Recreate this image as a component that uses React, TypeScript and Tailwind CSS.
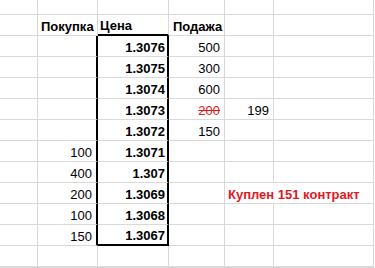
import React from "react";

type C = { t?: string; cls?: string };

const G = "border-[#d9d9d9]";

export default function App() {
  const rows: { buy?: string; price?: string; sell?: string; sellCls?: string; c4?: string; c4Cls?: string; c4Overflow?: boolean }[] = [
    { price: "1.3076", sell: "500" },
    { price: "1.3075", sell: "300" },
    { price: "1.3074", sell: "600" },
    { price: "1.3073", sell: "200", sellCls: "line-through text-[#e0191f]", c4: "199" },
    { price: "1.3072", sell: "150" },
    { buy: "100", price: "1.3071" },
    { buy: "400", price: "1.307" },
    { buy: "200", price: "1.3069", c4: "Куплен 151 контракт", c4Overflow: true },
    { buy: "100", price: "1.3068" },
    { buy: "150", price: "1.3067" },
  ];

  const base = `flex items-end pb-[1px] border-b border-r ${G} whitespace-nowrap`;

  const emptyRow = (h: string, key: string) => (
    <React.Fragment key={key}>
      {[0, 1, 2, 3, 4, 5].map((i) => (
        <div key={i} className={`${h} border-b border-r ${G}`} />
      ))}
      <div className={`${h}`} />
    </React.Fragment>
  );

  return (
    <div
      className="w-[375px] h-[268px] overflow-hidden bg-white text-black text-[13px] leading-[15px]"
      style={{ fontFamily: '"Liberation Sans", Arial, sans-serif' }}
    >
      <div className="grid grid-cols-[38px_60px_71px_56px_49px_100px_1fr] grid-rows-[15px_repeat(12,21px)_1fr] h-[268px]">
        {emptyRow("h-[15px]", "r0")}
        {/* header */}
        <div className={`${base}`} />
        <div className={`${base} pl-[3px] font-bold`}>Покупка</div>
        <div className={`${base} !border-b-black border-b-2 pl-[2px] font-bold`} style={{ borderBottomWidth: 2 }}>Цена</div>
        <div className={`${base} pl-[4px] font-bold`}>Подажа</div>
        <div className={`${base}`} />
        <div className={`${base}`} />
        <div />
        {rows.map((r, i) => {
          const last = i === rows.length - 1;
          return (
            <React.Fragment key={i}>
              <div className={base} />
              <div className={`${base} justify-end pr-[4px] !border-r-black border-r-2`}>{r.buy}</div>
              <div
                className={`${base} justify-end pr-[2px] font-bold !border-r-black border-r-2 ${last ? "!border-b-black border-b-2 pb-0" : ""}`}
              >
                {r.price}
              </div>
              <div className={`${base} justify-end pr-[4px]`}>
                <span className={r.sellCls}>{r.sell}</span>
              </div>
              {r.c4Overflow ? (
                <div className={`flex items-end pb-[1px] border-b ${G} whitespace-nowrap pl-[3px] overflow-visible relative z-10 font-bold text-[#e0191f]`}>
                  {r.c4}
                </div>
              ) : (
                <div className={`${base} justify-end pr-[4px]`}>{r.c4}</div>
              )}
              <div className={base} />
              <div />
            </React.Fragment>
          );
        })}
        {emptyRow("h-[21px]", "r12")}
        {emptyRow("", "r13")}
      </div>
    </div>
  );
}
